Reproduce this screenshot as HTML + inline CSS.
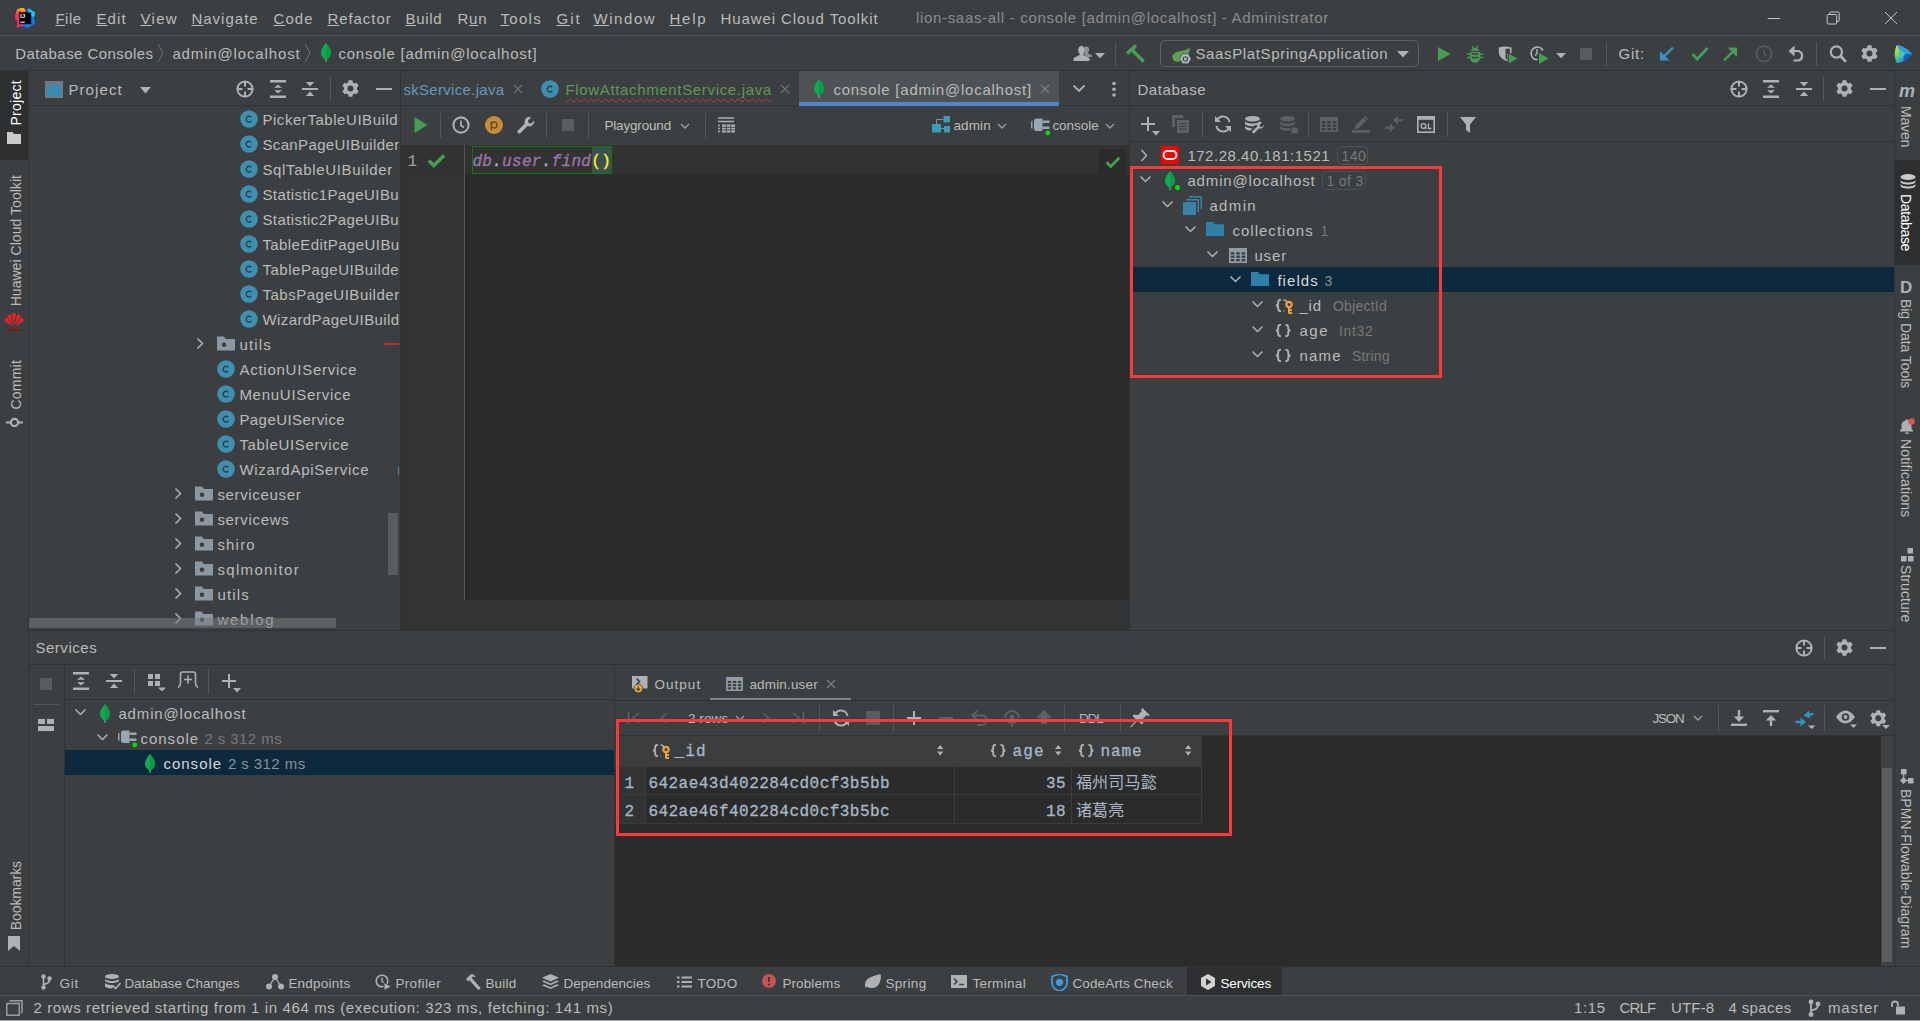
<!DOCTYPE html>
<html lang="en"><head><meta charset="utf-8"><title>console [admin@localhost]</title>
<style>
html,body{margin:0;padding:0;}
body{width:1920px;height:1021px;overflow:hidden;background:#3c3f41;position:relative;font-family:"Liberation Sans","Noto Sans CJK SC",sans-serif;font-size:15px;color:#bbbbbb;}
div,svg,span.t{position:absolute;display:block;}
.t{white-space:nowrap;}
.m{font-family:"Liberation Mono","Noto Sans CJK SC",monospace;}
u{text-decoration-thickness:1px;text-underline-offset:1px;}

</style></head>
<body>
<div style="left:0px;top:35px;width:1920px;height:1px;background:#515151;"></div>
<div style="left:0px;top:70px;width:1920px;height:1px;background:#323232;"></div>
<div style="left:28px;top:71px;width:1px;height:896px;background:#323232;"></div>
<div style="left:400px;top:71px;width:1px;height:560px;background:#323232;"></div>
<div style="left:1129px;top:71px;width:1px;height:560px;background:#323232;"></div>
<div style="left:1894px;top:71px;width:1px;height:896px;background:#323232;"></div>
<div style="left:29px;top:105px;width:371px;height:1px;background:#323232;"></div>
<div style="left:401px;top:105px;width:728px;height:1px;background:#323232;"></div>
<div style="left:1130px;top:105px;width:764px;height:1px;background:#323232;"></div>
<div style="left:1130px;top:141px;width:764px;height:1px;background:#323232;"></div>
<div style="left:401px;top:145px;width:728px;height:455px;background:#2b2b2b;"></div>
<div style="left:29px;top:630px;width:1865px;height:1px;background:#323232;"></div>
<div style="left:29px;top:664px;width:1865px;height:1px;background:#323232;"></div>
<div style="left:0px;top:966px;width:1920px;height:1px;background:#323232;"></div>
<div style="left:0px;top:995px;width:1920px;height:1px;background:#4f5254;"></div>
<svg style="left:15px;top:8px;" width="20" height="20" viewBox="0 0 20 20"><polygon points="0.500,6.500 2.500,0.800 7.500,0 10,3 5,8" fill="#fc9a1d"/><polygon points="0,7 4,2.500 10,2.500 12,10 7,17 1.500,19.800 2.500,13.500 0,11" fill="#fe2857"/><polygon points="5,0.300 9,0 11,3 6,4" fill="#fdb60d" opacity=".9"/><polygon points="12,1.500 14,0 20,4.500 19,10 20,15.500 13,20 10,19 7,16 12,8" fill="#087cfa"/><polygon points="13,0.300 20,4.500 19,9.500 14,6" fill="#21c8fd"/><polygon points="1.500,19.800 7,14 10,19 6,18" fill="#d2359f"/><rect x="4.200" y="4.400" width="12" height="11.800" fill="#000"/><rect x="5.300" y="13.600" width="4.500" height="1.100" fill="#fff"/><text x="5.100" y="10.300" font-size="6.200" font-weight="700" fill="#fff" font-family="Liberation Sans,sans-serif">IJ</text></svg>
<span class="t" style="left:55.4px;top:9px;line-height:20px;font-size:15px;color:#bbbbbb;letter-spacing:0.538px;"><u>F</u>ile</span>
<span class="t" style="left:96.4px;top:9px;line-height:20px;font-size:15px;color:#bbbbbb;letter-spacing:1.147px;"><u>E</u>dit</span>
<span class="t" style="left:140.4px;top:9px;line-height:20px;font-size:15px;color:#bbbbbb;letter-spacing:1.350px;"><u>V</u>iew</span>
<span class="t" style="left:191.4px;top:9px;line-height:20px;font-size:15px;color:#bbbbbb;letter-spacing:1.012px;"><u>N</u>avigate</span>
<span class="t" style="left:273.4px;top:9px;line-height:20px;font-size:15px;color:#bbbbbb;letter-spacing:1.142px;"><u>C</u>ode</span>
<span class="t" style="left:327.4px;top:9px;line-height:20px;font-size:15px;color:#bbbbbb;letter-spacing:0.942px;"><u>R</u>efactor</span>
<span class="t" style="left:405.4px;top:9px;line-height:20px;font-size:15px;color:#bbbbbb;letter-spacing:0.731px;"><u>B</u>uild</span>
<span class="t" style="left:457.4px;top:9px;line-height:20px;font-size:15px;color:#bbbbbb;letter-spacing:0.884px;">R<u>u</u>n</span>
<span class="t" style="left:500.4px;top:9px;line-height:20px;font-size:15px;color:#bbbbbb;letter-spacing:1.317px;"><u>T</u>ools</span>
<span class="t" style="left:556.4px;top:9px;line-height:20px;font-size:15px;color:#bbbbbb;letter-spacing:2.064px;"><u>G</u>it</span>
<span class="t" style="left:593.4px;top:9px;line-height:20px;font-size:15px;color:#bbbbbb;letter-spacing:1.585px;"><u>W</u>indow</span>
<span class="t" style="left:669.4px;top:9px;line-height:20px;font-size:15px;color:#bbbbbb;letter-spacing:1.808px;"><u>H</u>elp</span>
<span class="t" style="left:720.4px;top:9px;line-height:20px;font-size:15px;color:#bbbbbb;letter-spacing:0.920px;">Huawei Cloud Toolkit</span>
<span class="t" style="left:915.9px;top:8px;line-height:20px;font-size:15px;color:#8b8d8e;letter-spacing:0.689px;">lion-saas-all - console [admin@localhost] - Administrator</span>
<svg style="left:1767px;top:11px;" width="14" height="14" viewBox="0 0 14 14"><path d="M.7 7.500h12.500" stroke="#c4c4c4" stroke-width="1"/></svg>
<svg style="left:1826px;top:11px;" width="14" height="14" viewBox="0 0 14 14"><rect x="1.200" y="3.500" width="9.500" height="9.500" rx="1" fill="none" stroke="#c4c4c4" stroke-width="1"/><path d="M3.700 3.500v-1.500q0-1 1-1h7.500q1 0 1 1v7.500q0 1-1 1h-1.500" fill="none" stroke="#c4c4c4" stroke-width="1"/></svg>
<svg style="left:1884px;top:11px;" width="14" height="14" viewBox="0 0 14 14"><path d="M1 1l12 12M13 1l-12 12" stroke="#c4c4c4" stroke-width="1"/></svg>
<span class="t" style="left:15.2px;top:44px;line-height:20px;font-size:15px;color:#bbbbbb;letter-spacing:0.430px;">Database Consoles</span>
<svg style="left:156px;top:43px;" width="10" height="20" viewBox="0 0 10 20"><path d="M2 1l5 9-5 9" stroke="#6d6f70" stroke-width="1" fill="none"/></svg>
<span class="t" style="left:172.4px;top:44px;line-height:20px;font-size:15px;color:#bbbbbb;letter-spacing:0.857px;">admin@localhost</span>
<svg style="left:303px;top:43px;" width="10" height="20" viewBox="0 0 10 20"><path d="M2 1l5 9-5 9" stroke="#6d6f70" stroke-width="1" fill="none"/></svg>
<svg style="left:321px;top:43px;" width="10" height="19" viewBox="0 0 10 19"><path d="M5 0C2 3.5 0 6.5 0 9.5C0 13 2.5 15.5 4.6 16.5L4.7 19h.8L5.6 16.5C7.5 15.5 10 13 10 9.5C10 6.5 8 3.5 5 0z" fill="#10aa50"/><path d="M5 0C8 3.5 10 6.5 10 9.5C10 13 7.5 15.5 5.4 16.5L5 16.5z" fill="#0e9a48"/><path d="M4.7 16.3h.7l-.1 2.7h-.5z" fill="#b8c4c2"/></svg>
<span class="t" style="left:338.4px;top:44px;line-height:20px;font-size:15px;color:#bbbbbb;letter-spacing:0.783px;">console [admin@localhost]</span>
<svg style="left:1073px;top:45px;" width="20" height="17" viewBox="0 0 20 17"><path d="M13.500 1.500c1.700 0 2.700 1.300 2.700 3 0 1.200-.5 2.300-1.200 3v.8l4 1.900v1.800h-4.500l-3.500-2.500c.5-1 .8-2 .8-3.300 0-1.500-.3-2.700-.9-3.600.7-.7 1.600-1.100 2.600-1.100z" fill="#8d9091"/><path d="M8.300 1c2.200 0 3.500 1.700 3.500 4 0 1.700-.6 3-1.500 3.900v1.200l5.200 2.500c.6.300 1 .9 1 1.600V16H.5v-1.800c0-.7.4-1.300 1-1.600l5.200-2.500V8.900C5.800 8 5.200 6.700 5.200 5c0-2.300 1-4 3.100-4z" fill="#afb1b3"/></svg>
<svg style="left:1095px;top:53px;" width="10" height="6" viewBox="0 0 10 6"><path d="M0 0h10l-5 5.200z" fill="#afb1b3"/></svg>
<div style="left:1115px;top:42px;width:1px;height:24px;background:#555758;"></div>
<svg style="left:1125px;top:44px;" width="21" height="20" viewBox="0 0 21 20"><path d="M2 9.700L10.500 2.200" stroke="#499c54" stroke-width="3.800"/><path d="M9.500 0.800l2.800 .2-2 2.500z" fill="#499c54"/><path d="M7.300 6.300L18.700 17.500" stroke="#499c54" stroke-width="3.300"/></svg>
<div style="left:1160px;top:40px;width:258px;height:26px;border:1px solid #5e6061;border-radius:5px;box-sizing:border-box;width:259px;height:27px;"></div>
<svg style="left:1171px;top:44px;" width="22" height="20" viewBox="0 0 22 20"><path d="M18.700 2.800C17.500 5.500 14 6.300 9.500 7 4 7.800.5 11 1.500 14.500 2.300 17.300 5.500 18.200 8.500 17.500 14.500 16 19.500 10 18.700 2.800z" fill="#62a04c"/><path d="M8.600 14.800L11.500 9.800h5.800L20.200 14.800 17.300 19.800h-5.800z" fill="#adbcc8" stroke="#3c3f41" stroke-width=".7"/><circle cx="14.400" cy="15" r="2.200" fill="none" stroke="#3c3f41" stroke-width="1.100"/><rect x="13.850" y="11.600" width="1.100" height="3" fill="#3c3f41" stroke="#adbcc8" stroke-width=".5"/></svg>
<span class="t" style="left:1195.4px;top:44px;line-height:20px;font-size:15px;color:#bbbbbb;letter-spacing:0.647px;">SaasPlatSpringApplication</span>
<svg style="left:1397px;top:51px;" width="12" height="7" viewBox="0 0 12 7"><path d="M0 0h12l-6 6.500z" fill="#afb1b3"/></svg>
<svg style="left:1438px;top:47px;" width="13" height="14" viewBox="0 0 13 14"><path d="M0 0l12.500 7L0 14z" fill="#499c54"/></svg>
<svg style="left:1467px;top:45px;" width="16" height="18" viewBox="0 0 16 18"><path d="M4.300 1.200l.9-.7L7 2.800h2L10.800.5l.9.700-1.600 2.200c1.100.4 2 1.300 2.500 2.400H3.400c.5-1.100 1.400-2 2.500-2.400z" fill="#499c54"/><path d="M3 7h10v1.500h3V10h-3v1.700h3v1.500h-3c-.3 2.600-2.300 4.500-5 4.500s-4.700-1.900-5-4.500H0v-1.500h3V10H0V8.500h3z" fill="#499c54"/><path d="M4.500 9h7M4.500 12.500h7" stroke="#3c3f41" stroke-width="1.500"/></svg>
<svg style="left:1498px;top:46px;" width="20" height="19" viewBox="0 0 20 19"><path d="M.8 1.500Q7 -.5 13.500 1.500v5.500l-4 1.500v7Q2 13 .8 7z" fill="#afb1b3"/><path d="M7.500 2.800h4.500v4.200l-3 1.300v5.200l-1.500-.8z" fill="#3c3f41"/><path d="M10.500 7l9.500 5.500-9.500 5.500z" fill="#499c54" stroke="#3c3f41" stroke-width=".8"/></svg>
<svg style="left:1529px;top:45px;" width="20" height="20" viewBox="0 0 20 20"><path d="M14 5.500A6.300 6.300 0 1 0 8.500 14.700" fill="none" stroke="#afb1b3" stroke-width="1.700"/><path d="M8 4v4.200l-1.800 2.500" stroke="#afb1b3" stroke-width="1.400" fill="none"/><path d="M10 8l9.500 5.500L10 19z" fill="#499c54"/></svg>
<svg style="left:1556px;top:53px;" width="10" height="6" viewBox="0 0 10 6"><path d="M0 0h10l-5 5.200z" fill="#afb1b3"/></svg>
<div style="left:1580px;top:48px;width:12px;height:12px;background:#5a5c5d;"></div>
<div style="left:1606px;top:42px;width:1px;height:24px;background:#555758;"></div>
<span class="t" style="left:1618.4px;top:44px;line-height:20px;font-size:15px;color:#bbbbbb;letter-spacing:0.819px;">Git:</span>
<svg style="left:1659px;top:46px;" width="15" height="15" viewBox="0 0 15 15"><path d="M14 1.500L5 10.500" stroke="#3592c4" stroke-width="2.400" fill="none"/><path d="M1 5v9.500h9.500z" fill="#3592c4"/></svg>
<svg style="left:1691px;top:46px;" width="18" height="15" viewBox="0 0 18 15"><path d="M1.500 8.200l4.800 4.800L16.500 2" stroke="#499c54" stroke-width="2.700" fill="none"/></svg>
<svg style="left:1723px;top:47px;" width="15" height="15" viewBox="0 0 15 15"><path d="M1 13.500l9-9" stroke="#499c54" stroke-width="2.400" fill="none"/><path d="M4.500 .5H14V10z" fill="#499c54"/></svg>
<svg style="left:1755px;top:45px;" width="18" height="18" viewBox="0 0 18 18"><circle cx="9" cy="8.800" r="7.700" fill="none" stroke="#595b5c" stroke-width="1.700"/><path d="M9 4.800v4.200l2.800 1.800" stroke="#595b5c" stroke-width="1.500" fill="none"/></svg>
<svg style="left:1788px;top:45px;" width="18" height="17" viewBox="0 0 18 17"><path d="M4.500 6h6.200a5 5 0 0 1 0 9.500H5.500" stroke="#afb1b3" stroke-width="2.200" fill="none"/><path d="M6.500 .5v11L.5 6z" fill="#afb1b3"/></svg>
<div style="left:1816px;top:42px;width:1px;height:24px;background:#555758;"></div>
<svg style="left:1828px;top:44px;" width="20" height="20" viewBox="0 0 20 20"><circle cx="8.400" cy="8" r="5.600" fill="none" stroke="#afb1b3" stroke-width="2.200"/><path d="M12.500 12l5.500 5.800" stroke="#afb1b3" stroke-width="2.600"/></svg>
<svg style="left:1861px;top:45px;" width="17" height="17" viewBox="0 0 16 16"><path d="M5.81 2.31L6.20 0.21L9.80 0.21L10.19 2.31L11.84 3.26L13.85 2.54L15.65 5.66L14.02 7.05L14.02 8.95L15.65 10.34L13.85 13.46L11.84 12.74L10.19 13.69L9.80 15.79L6.20 15.79L5.81 13.69L4.16 12.74L2.15 13.46L0.35 10.34L1.98 8.95L1.98 7.05L0.35 5.66L2.15 2.54L4.16 3.26z" fill="#afb1b3"/><circle cx="8" cy="8" r="2.800" fill="#3c3f41"/></svg>
<svg style="left:1894px;top:44px;" width="19" height="20" viewBox="0 0 19 20"><defs><linearGradient id="cg" x1="0" y1="0" x2="0" y2="1"><stop offset="0" stop-color="#f2e23c"/><stop offset=".5" stop-color="#8fd455"/><stop offset="1" stop-color="#22b4a0"/></linearGradient></defs><path d="M3 1C9 1.500 15 6 18 10 15 14 9 18.500 3 19 0 13 0 7 3 1z" fill="#2a9fe0"/><path d="M3 1C6 6 6 14 3 19 0 13 0 7 3 1z" fill="url(#cg)"/><path d="M3 1C5 4 9 8.500 11 10 9 11.500 5 16 3 19 6.500 14 6.500 6 3 1z" fill="#3fc79a"/><path d="M11 10L18 10 14 14.500 9 17z" fill="#1559c8"/><path d="M6 5.500L11 10 6 14.500Q7.500 10 6 5.500z" fill="#46d0b0" opacity=".8"/></svg>
<svg style="left:45px;top:81px;" width="18" height="17" viewBox="0 0 18 17"><rect x="0" y="0" width="18" height="17" fill="#6e7b85"/><rect x="2" y="4" width="14" height="11" fill="#3a8bb0"/></svg>
<span class="t" style="left:68.4px;top:80px;line-height:20px;font-size:15px;color:#bbbbbb;letter-spacing:1.102px;">Project</span>
<svg style="left:140px;top:87px;" width="11" height="7" viewBox="0 0 11 7"><path d="M0 0h11l-5.500 6.500z" fill="#afb1b3"/></svg>
<svg style="left:236px;top:80px;" width="18" height="18" viewBox="0 0 18 18"><circle cx="9" cy="9" r="7.600" fill="none" stroke="#afb1b3" stroke-width="2"/><path d="M9 1.500v5M9 11.500v5M1.500 9h5M11.500 9h5" stroke="#afb1b3" stroke-width="2"/></svg>
<svg style="left:270px;top:80px;" width="16" height="18" viewBox="0 0 16 18"><path d="M0 1.300h16M0 16.700h16" stroke="#afb1b3" stroke-width="2.500"/><path d="M8 4.400l4 3.300H4zM8 13.600l4-3.300H4z" fill="#afb1b3"/></svg>
<svg style="left:302px;top:80px;" width="16" height="18" viewBox="0 0 16 18"><path d="M0 9h16" stroke="#afb1b3" stroke-width="2"/><path d="M8 6.500l4.200-4.500H3.800zM8 11.500l4.200 4.500H3.800z" fill="#afb1b3"/></svg>
<div style="left:330px;top:77px;width:1px;height:24px;background:#555758;"></div>
<svg style="left:342px;top:80px;" width="17" height="17" viewBox="0 0 16 16"><path d="M5.81 2.31L6.20 0.21L9.80 0.21L10.19 2.31L11.84 3.26L13.85 2.54L15.65 5.66L14.02 7.05L14.02 8.95L15.65 10.34L13.85 13.46L11.84 12.74L10.19 13.69L9.80 15.79L6.20 15.79L5.81 13.69L4.16 12.74L2.15 13.46L0.35 10.34L1.98 8.95L1.98 7.05L0.35 5.66L2.15 2.54L4.16 3.26z" fill="#afb1b3"/><circle cx="8" cy="8" r="2.800" fill="#3c3f41"/></svg>
<div style="left:376px;top:88px;width:16px;height:2px;background:#afb1b3;"></div>
<div style="left:0;top:106px;width:399px;height:524px;overflow:hidden"><div style="left:0;top:-106px;width:400px;height:630px">
<svg style="left:240px;top:110px;" width="18" height="18" viewBox="0 0 18 18"><circle cx="9" cy="9" r="8.800" fill="#3e8fb0"/><path d="M11.300 7.200a2.900 2.900 0 1 0 0 3.800" fill="none" stroke="#27434f" stroke-width="1.400"/></svg>
<span class="t" style="left:262.4px;top:110px;line-height:20px;font-size:15px;color:#bbbbbb;letter-spacing:0.553px;">PickerTableUIBuilder</span>
<svg style="left:240px;top:135px;" width="18" height="18" viewBox="0 0 18 18"><circle cx="9" cy="9" r="8.800" fill="#3e8fb0"/><path d="M11.300 7.200a2.900 2.900 0 1 0 0 3.800" fill="none" stroke="#27434f" stroke-width="1.400"/></svg>
<span class="t" style="left:262.4px;top:135px;line-height:20px;font-size:15px;color:#bbbbbb;letter-spacing:0.367px;">ScanPageUIBuilder</span>
<svg style="left:240px;top:160px;" width="18" height="18" viewBox="0 0 18 18"><circle cx="9" cy="9" r="8.800" fill="#3e8fb0"/><path d="M11.300 7.200a2.900 2.900 0 1 0 0 3.800" fill="none" stroke="#27434f" stroke-width="1.400"/></svg>
<span class="t" style="left:262.4px;top:160px;line-height:20px;font-size:15px;color:#bbbbbb;letter-spacing:0.660px;">SqlTableUIBuilder</span>
<svg style="left:240px;top:185px;" width="18" height="18" viewBox="0 0 18 18"><circle cx="9" cy="9" r="8.800" fill="#3e8fb0"/><path d="M11.300 7.200a2.900 2.900 0 1 0 0 3.800" fill="none" stroke="#27434f" stroke-width="1.400"/></svg>
<span class="t" style="left:262.4px;top:185px;line-height:20px;font-size:15px;color:#bbbbbb;letter-spacing:0.415px;">Statistic1PageUIBuilder</span>
<svg style="left:240px;top:210px;" width="18" height="18" viewBox="0 0 18 18"><circle cx="9" cy="9" r="8.800" fill="#3e8fb0"/><path d="M11.300 7.200a2.900 2.900 0 1 0 0 3.800" fill="none" stroke="#27434f" stroke-width="1.400"/></svg>
<span class="t" style="left:262.4px;top:210px;line-height:20px;font-size:15px;color:#bbbbbb;letter-spacing:0.415px;">Statistic2PageUIBuilder</span>
<svg style="left:240px;top:235px;" width="18" height="18" viewBox="0 0 18 18"><circle cx="9" cy="9" r="8.800" fill="#3e8fb0"/><path d="M11.300 7.200a2.900 2.900 0 1 0 0 3.800" fill="none" stroke="#27434f" stroke-width="1.400"/></svg>
<span class="t" style="left:262.4px;top:235px;line-height:20px;font-size:15px;color:#bbbbbb;letter-spacing:0.419px;">TableEditPageUIBuilder</span>
<svg style="left:240px;top:260px;" width="18" height="18" viewBox="0 0 18 18"><circle cx="9" cy="9" r="8.800" fill="#3e8fb0"/><path d="M11.300 7.200a2.900 2.900 0 1 0 0 3.800" fill="none" stroke="#27434f" stroke-width="1.400"/></svg>
<span class="t" style="left:262.4px;top:260px;line-height:20px;font-size:15px;color:#bbbbbb;letter-spacing:0.544px;">TablePageUIBuilder</span>
<svg style="left:240px;top:285px;" width="18" height="18" viewBox="0 0 18 18"><circle cx="9" cy="9" r="8.800" fill="#3e8fb0"/><path d="M11.300 7.200a2.900 2.900 0 1 0 0 3.800" fill="none" stroke="#27434f" stroke-width="1.400"/></svg>
<span class="t" style="left:262.4px;top:285px;line-height:20px;font-size:15px;color:#bbbbbb;letter-spacing:0.524px;">TabsPageUIBuilder</span>
<svg style="left:240px;top:310px;" width="18" height="18" viewBox="0 0 18 18"><circle cx="9" cy="9" r="8.800" fill="#3e8fb0"/><path d="M11.300 7.200a2.900 2.900 0 1 0 0 3.800" fill="none" stroke="#27434f" stroke-width="1.400"/></svg>
<span class="t" style="left:262.4px;top:310px;line-height:20px;font-size:15px;color:#bbbbbb;letter-spacing:0.421px;">WizardPageUIBuilder</span>
<svg style="left:195px;top:336px;" width="10" height="15" viewBox="0 0 10 15"><path d="M2.500 2.500l5 5-5 5" fill="none" stroke="#afb1b3" stroke-width="1.500"/></svg>
<svg style="left:217px;top:336px;" width="18" height="15" viewBox="0 0 18 15"><path d="M0 .5h6.800l2 2.500H18V14.500H0z" fill="#8b98a1"/><circle cx="7" cy="8.700" r="2.300" fill="#3c3f41"/></svg>
<span class="t" style="left:239.4px;top:335px;line-height:20px;font-size:15px;color:#bbbbbb;letter-spacing:1.153px;">utils</span>
<div style="left:384px;top:343px;width:16px;height:2px;background:#c03030;"></div>
<svg style="left:217px;top:360px;" width="18" height="18" viewBox="0 0 18 18"><circle cx="9" cy="9" r="8.800" fill="#3e8fb0"/><path d="M11.300 7.200a2.900 2.900 0 1 0 0 3.800" fill="none" stroke="#27434f" stroke-width="1.400"/></svg>
<span class="t" style="left:239.4px;top:360px;line-height:20px;font-size:15px;color:#bbbbbb;letter-spacing:0.756px;">ActionUIService</span>
<svg style="left:217px;top:385px;" width="18" height="18" viewBox="0 0 18 18"><circle cx="9" cy="9" r="8.800" fill="#3e8fb0"/><path d="M11.300 7.200a2.900 2.900 0 1 0 0 3.800" fill="none" stroke="#27434f" stroke-width="1.400"/></svg>
<span class="t" style="left:239.4px;top:385px;line-height:20px;font-size:15px;color:#bbbbbb;letter-spacing:0.729px;">MenuUIService</span>
<svg style="left:217px;top:410px;" width="18" height="18" viewBox="0 0 18 18"><circle cx="9" cy="9" r="8.800" fill="#3e8fb0"/><path d="M11.300 7.200a2.900 2.900 0 1 0 0 3.800" fill="none" stroke="#27434f" stroke-width="1.400"/></svg>
<span class="t" style="left:239.4px;top:410px;line-height:20px;font-size:15px;color:#bbbbbb;letter-spacing:0.436px;">PageUIService</span>
<svg style="left:217px;top:435px;" width="18" height="18" viewBox="0 0 18 18"><circle cx="9" cy="9" r="8.800" fill="#3e8fb0"/><path d="M11.300 7.200a2.900 2.900 0 1 0 0 3.800" fill="none" stroke="#27434f" stroke-width="1.400"/></svg>
<span class="t" style="left:239.4px;top:435px;line-height:20px;font-size:15px;color:#bbbbbb;letter-spacing:0.647px;">TableUIService</span>
<svg style="left:217px;top:460px;" width="18" height="18" viewBox="0 0 18 18"><circle cx="9" cy="9" r="8.800" fill="#3e8fb0"/><path d="M11.300 7.200a2.900 2.900 0 1 0 0 3.800" fill="none" stroke="#27434f" stroke-width="1.400"/></svg>
<span class="t" style="left:239.4px;top:460px;line-height:20px;font-size:15px;color:#bbbbbb;letter-spacing:0.728px;">WizardApiService</span>
<svg style="left:173px;top:486px;" width="10" height="15" viewBox="0 0 10 15"><path d="M2.500 2.500l5 5-5 5" fill="none" stroke="#afb1b3" stroke-width="1.500"/></svg>
<svg style="left:195px;top:486px;" width="18" height="15" viewBox="0 0 18 15"><path d="M0 .5h6.800l2 2.500H18V14.500H0z" fill="#8b98a1"/><circle cx="7" cy="8.700" r="2.300" fill="#3c3f41"/></svg>
<span class="t" style="left:217.4px;top:485px;line-height:20px;font-size:15px;color:#bbbbbb;letter-spacing:0.660px;">serviceuser</span>
<svg style="left:173px;top:511px;" width="10" height="15" viewBox="0 0 10 15"><path d="M2.500 2.500l5 5-5 5" fill="none" stroke="#afb1b3" stroke-width="1.500"/></svg>
<svg style="left:195px;top:511px;" width="18" height="15" viewBox="0 0 18 15"><path d="M0 .5h6.800l2 2.500H18V14.500H0z" fill="#8b98a1"/><circle cx="7" cy="8.700" r="2.300" fill="#3c3f41"/></svg>
<span class="t" style="left:217.4px;top:510px;line-height:20px;font-size:15px;color:#bbbbbb;letter-spacing:0.680px;">servicews</span>
<svg style="left:173px;top:536px;" width="10" height="15" viewBox="0 0 10 15"><path d="M2.500 2.500l5 5-5 5" fill="none" stroke="#afb1b3" stroke-width="1.500"/></svg>
<svg style="left:195px;top:536px;" width="18" height="15" viewBox="0 0 18 15"><path d="M0 .5h6.800l2 2.500H18V14.500H0z" fill="#8b98a1"/><circle cx="7" cy="8.700" r="2.300" fill="#3c3f41"/></svg>
<span class="t" style="left:217.4px;top:535px;line-height:20px;font-size:15px;color:#bbbbbb;letter-spacing:1.196px;">shiro</span>
<svg style="left:173px;top:561px;" width="10" height="15" viewBox="0 0 10 15"><path d="M2.500 2.500l5 5-5 5" fill="none" stroke="#afb1b3" stroke-width="1.500"/></svg>
<svg style="left:195px;top:561px;" width="18" height="15" viewBox="0 0 18 15"><path d="M0 .5h6.800l2 2.500H18V14.500H0z" fill="#8b98a1"/><circle cx="7" cy="8.700" r="2.300" fill="#3c3f41"/></svg>
<span class="t" style="left:217.4px;top:560px;line-height:20px;font-size:15px;color:#bbbbbb;letter-spacing:1.344px;">sqlmonitor</span>
<svg style="left:173px;top:586px;" width="10" height="15" viewBox="0 0 10 15"><path d="M2.500 2.500l5 5-5 5" fill="none" stroke="#afb1b3" stroke-width="1.500"/></svg>
<svg style="left:195px;top:586px;" width="18" height="15" viewBox="0 0 18 15"><path d="M0 .5h6.800l2 2.500H18V14.500H0z" fill="#8b98a1"/><circle cx="7" cy="8.700" r="2.300" fill="#3c3f41"/></svg>
<span class="t" style="left:217.4px;top:585px;line-height:20px;font-size:15px;color:#bbbbbb;letter-spacing:1.153px;">utils</span>
<svg style="left:173px;top:611px;" width="10" height="15" viewBox="0 0 10 15"><path d="M2.500 2.500l5 5-5 5" fill="none" stroke="#afb1b3" stroke-width="1.500"/></svg>
<svg style="left:195px;top:611px;" width="18" height="15" viewBox="0 0 18 15"><path d="M0 .5h6.800l2 2.500H18V14.500H0z" fill="#8b98a1"/><circle cx="7" cy="8.700" r="2.300" fill="#3c3f41"/></svg>
<span class="t" style="left:217.4px;top:610px;line-height:20px;font-size:15px;color:#bbbbbb;letter-spacing:1.751px;">weblog</span>
<div style="left:388px;top:513px;width:10px;height:62px;background:#5a5d5f;"></div>
<div style="left:29px;top:618px;width:307px;height:10px;background:rgba(120,123,125,.55);"></div>
</div></div>
<div style="left:398px;top:467px;width:1px;height:8px;background:#4a7fb5;"></div>
<div style="left:401px;top:71px;width:728px;height:35px;overflow:hidden"><div style="left:-401px;top:-71px;width:1130px;height:110px">
<span class="t" style="left:403.4px;top:80px;line-height:20px;font-size:15px;color:#6897bb;letter-spacing:0.315px;">skService.java</span>
<svg style="left:513px;top:84px;" width="10" height="10" viewBox="0 0 10 10"><path d="M1 1l8 8M9 1l-8 8" stroke="#6e7173" stroke-width="1.200"/></svg>
<svg style="left:541px;top:80px;" width="18" height="18" viewBox="0 0 18 18"><circle cx="9" cy="9" r="8.800" fill="#3e8fb0"/><path d="M11.300 7.200a2.900 2.900 0 1 0 0 3.800" fill="none" stroke="#27434f" stroke-width="1.400"/></svg>
<span class="t" style="left:565.4px;top:80px;line-height:20px;font-size:15px;color:#629755;letter-spacing:0.662px;text-decoration:underline wavy #bc3f3c 1px;text-underline-offset:3px;">FlowAttachmentService.java</span>
<svg style="left:780px;top:84px;" width="10" height="10" viewBox="0 0 10 10"><path d="M1 1l8 8M9 1l-8 8" stroke="#6e7173" stroke-width="1.200"/></svg>
<div style="left:799px;top:71px;width:260px;height:34px;background:#4e5254;"></div>
<div style="left:799px;top:102px;width:260px;height:4px;background:#4a88c7;"></div>
<svg style="left:814px;top:79px;" width="10" height="19" viewBox="0 0 10 19"><path d="M5 0C2 3.5 0 6.5 0 9.5C0 13 2.5 15.5 4.6 16.5L4.7 19h.8L5.6 16.5C7.5 15.5 10 13 10 9.5C10 6.5 8 3.5 5 0z" fill="#10aa50"/><path d="M5 0C8 3.5 10 6.5 10 9.5C10 13 7.5 15.5 5.4 16.5L5 16.5z" fill="#0e9a48"/><path d="M4.7 16.3h.7l-.1 2.7h-.5z" fill="#b8c4c2"/></svg>
<span class="t" style="left:833.4px;top:80px;line-height:20px;font-size:15px;color:#bbbbbb;letter-spacing:0.763px;">console [admin@localhost]</span>
<svg style="left:1040px;top:84px;" width="10" height="10" viewBox="0 0 10 10"><path d="M1 1l8 8M9 1l-8 8" stroke="#7f8283" stroke-width="1.200"/></svg>
</div></div>
<svg style="left:1072px;top:84px;" width="14" height="9" viewBox="0 0 14 9"><path d="M1.500 1.500l5.500 5.500 5.500-5.500" fill="none" stroke="#afb1b3" stroke-width="1.800"/></svg>
<svg style="left:1111px;top:81px;" width="6" height="17" viewBox="0 0 6 17"><circle cx="3" cy="2.500" r="1.800" fill="#afb1b3"/><circle cx="3" cy="8.200" r="1.800" fill="#afb1b3"/><circle cx="3" cy="14" r="1.800" fill="#afb1b3"/></svg>
<svg style="left:414px;top:117px;" width="14" height="16" viewBox="0 0 14 16"><path d="M.5 0l13 8-13 8z" fill="#499c54"/></svg>
<div style="left:440px;top:113px;width:1px;height:25px;background:#555758;"></div>
<svg style="left:452px;top:116px;" width="18" height="18" viewBox="0 0 18 18"><circle cx="9" cy="9" r="7.600" fill="none" stroke="#afb1b3" stroke-width="2.100"/><path d="M9 4.500v5l3 2" stroke="#afb1b3" stroke-width="1.700" fill="none"/></svg>
<svg style="left:485px;top:116px;" width="18" height="18" viewBox="0 0 18 18"><circle cx="9" cy="9" r="9" fill="#c38d3c"/><path d="M6.300 5.500v9M6.300 8.300q1.200-2.300 3.200-2.300 2.500 0 2.500 3 0 3-2.500 3-2 0-3.200-2" fill="none" stroke="#6a4a1a" stroke-width="1.400"/></svg>
<svg style="left:517px;top:116px;" width="18" height="18" viewBox="0 0 18 18"><path d="M12.500.800a5 5 0 0 0-4.600 6.700L.9 14.500a1.600 1.600 0 0 0 0 2.300l.3.300a1.600 1.600 0 0 0 2.300 0l7-7a5 5 0 0 0 6.700-4.600l-.1-.9-3 3-2.500-.6-.6-2.500 3-3z" fill="#afb1b3"/></svg>
<div style="left:546px;top:113px;width:1px;height:25px;background:#555758;"></div>
<div style="left:562px;top:119px;width:12px;height:12px;background:#5a5c5d;"></div>
<div style="left:588px;top:113px;width:1px;height:25px;background:#555758;"></div>
<span class="t" style="left:604.4px;top:116px;line-height:20px;font-size:13.5px;color:#bbbbbb;letter-spacing:-0.168px;">Playground</span>
<svg style="left:680px;top:123px;" width="10" height="7" viewBox="0 0 10 7"><path d="M1 1l4 4 4-4" fill="none" stroke="#9a9da0" stroke-width="1.400"/></svg>
<div style="left:705px;top:113px;width:1px;height:25px;background:#555758;"></div>
<svg style="left:718px;top:117px;" width="18" height="16" viewBox="0 0 18 16"><path d="M0 1h16M0 4.500h16" stroke="#afb1b3" stroke-width="1.600"/><path d="M0 8.500h2M0 11.500h2M0 14.500h2" stroke="#afb1b3" stroke-width="1.600"/><rect x="4" y="7.500" width="13" height="8" fill="#afb1b3"/><path d="M8.300 7.500v8M12.700 7.500v8M4 10.300h13M4 12.900h13" stroke="#3c3f41" stroke-width=".9"/></svg>
<svg style="left:932px;top:116px;" width="18" height="17" viewBox="0 0 18 17"><path d="M4.500 8V3.500h7M9 12.500h3" stroke="#8a8d8f" stroke-width="1" fill="none"/><rect x="11.500" y="0" width="6.500" height="6.500" fill="#3b9cb8"/><rect x="0" y="8" width="9" height="8.500" fill="#3b9cb8"/><rect x="12" y="10" width="6" height="6.500" fill="#3b9cb8"/></svg>
<span class="t" style="left:953.4px;top:116px;line-height:20px;font-size:13.5px;color:#bbbbbb;letter-spacing:0.130px;">admin</span>
<svg style="left:997px;top:123px;" width="10" height="7" viewBox="0 0 10 7"><path d="M1 1l4 4 4-4" fill="none" stroke="#9a9da0" stroke-width="1.400"/></svg>
<svg style="left:1030.5px;top:116px;" width="20" height="20" viewBox="0 0 20 20"><path d="M0 6.500q0-2 1.500-2v8.500Q0 13 0 11z" fill="#9aa7b0"/><path d="M3 4.500Q3 2.500 5.500 2.500h6v12.500h-6Q3 15 3 13z" fill="#9aa7b0"/><path d="M11.500 4.500h7v2.500h-7zM11.500 10.500h7v2.500h-7z" fill="#9aa7b0"/><circle cx="16.800" cy="17" r="2.400" fill="#00e000"/></svg>
<span class="t" style="left:1052.4px;top:116px;line-height:20px;font-size:13.5px;color:#bbbbbb;letter-spacing:-0.041px;">console</span>
<svg style="left:1105px;top:123px;" width="10" height="7" viewBox="0 0 10 7"><path d="M1 1l4 4 4-4" fill="none" stroke="#9a9da0" stroke-width="1.400"/></svg>
<div style="left:401px;top:145px;width:63px;height:455px;background:#313335;"></div>
<div style="left:464px;top:145px;width:1px;height:455px;background:#555555;"></div>
<div style="left:401px;top:145px;width:728px;height:29px;background:#323232;"></div>
<div style="left:464px;top:145px;width:1px;height:29px;background:#555555;"></div>
<span class="t m" style="left:407.4px;top:152px;line-height:20px;font-size:16px;color:#a4a3a3;">1</span>
<svg style="left:427px;top:153px;" width="19" height="15" viewBox="0 0 19 15"><path d="M1.800 7.500l5 5L17 2.500" stroke="#499c54" stroke-width="3.600" fill="none"/></svg>
<div style="left:472px;top:146px;width:140px;height:28px;border:1px solid #0a7a0a;box-sizing:border-box;"></div>
<div style="left:592px;top:147px;width:19px;height:26px;background:#3b514d;"></div>
<span class="t m" style="left:472.4px;top:152px;line-height:20px;font-size:16px;color:#9876aa;letter-spacing:0.297px;font-style:italic;-webkit-text-stroke:0.35px;">db<span style="color:#a9b7c6">.</span>user<span style="color:#a9b7c6">.</span>find<span style="color:#ffef28;font-style:normal">()</span></span>
<div style="left:1099px;top:149px;width:27px;height:25px;background:#2b2b2b;border-radius:5px 5px 0 0;"></div>
<svg style="left:1105px;top:156px;" width="16" height="13" viewBox="0 0 16 13"><path d="M1.500 6.200l4.200 4.300L14.300 1.800" stroke="#499c54" stroke-width="2.800" fill="none"/></svg>
<div style="left:401px;top:600px;width:728px;height:30px;background:#313335;"></div>
<span class="t" style="left:1137.4px;top:80px;line-height:20px;font-size:15px;color:#bbbbbb;letter-spacing:0.583px;">Database</span>
<svg style="left:1730px;top:80px;" width="18" height="18" viewBox="0 0 18 18"><circle cx="9" cy="9" r="7.600" fill="none" stroke="#afb1b3" stroke-width="2"/><path d="M9 1.500v5M9 11.500v5M1.500 9h5M11.500 9h5" stroke="#afb1b3" stroke-width="2"/></svg>
<svg style="left:1763px;top:80px;" width="16" height="18" viewBox="0 0 16 18"><path d="M0 1.300h16M0 16.700h16" stroke="#afb1b3" stroke-width="2.500"/><path d="M8 4.400l4 3.300H4zM8 13.600l4-3.300H4z" fill="#afb1b3"/></svg>
<svg style="left:1796px;top:80px;" width="16" height="18" viewBox="0 0 16 18"><path d="M0 9h16" stroke="#afb1b3" stroke-width="2"/><path d="M8 6.500l4.200-4.500H3.800zM8 11.500l4.200 4.500H3.800z" fill="#afb1b3"/></svg>
<div style="left:1823px;top:77px;width:1px;height:24px;background:#555758;"></div>
<svg style="left:1836px;top:80px;" width="17" height="17" viewBox="0 0 16 16"><path d="M5.81 2.31L6.20 0.21L9.80 0.21L10.19 2.31L11.84 3.26L13.85 2.54L15.65 5.66L14.02 7.05L14.02 8.95L15.65 10.34L13.85 13.46L11.84 12.74L10.19 13.69L9.80 15.79L6.20 15.79L5.81 13.69L4.16 12.74L2.15 13.46L0.35 10.34L1.98 8.95L1.98 7.05L0.35 5.66L2.15 2.54L4.16 3.26z" fill="#afb1b3"/><circle cx="8" cy="8" r="2.800" fill="#3c3f41"/></svg>
<div style="left:1870px;top:88px;width:16px;height:2px;background:#afb1b3;"></div>
<svg style="left:1141px;top:116px;" width="20" height="20" viewBox="0 0 20 20"><path d="M7 1v14M0 8h14" stroke="#afb1b3" stroke-width="2"/><path d="M11 15h8l-4 4.500z" fill="#afb1b3"/></svg>
<svg style="left:1172px;top:115px;" width="18" height="18" viewBox="0 0 18 18"><path d="M0 0h11v3H3v9H0z" fill="#5e6061"/><rect x="5" y="5" width="12" height="13" fill="#5e6061"/><path d="M7.500 9h7M7.500 11.500h7M7.500 14h7" stroke="#3c3f41" stroke-width="1"/></svg>
<div style="left:1202px;top:112px;width:1px;height:25px;background:#555758;"></div>
<svg style="left:1214px;top:115px;" width="18" height="18" viewBox="0 0 18 18"><path d="M15.500 7A6.700 6.700 0 0 0 3.300 4.500M2.500 11a6.700 6.700 0 0 0 12.200 2.500" fill="none" stroke="#afb1b3" stroke-width="2"/><path d="M1 1v6h6zM17 17v-6h-6z" fill="#afb1b3"/></svg>
<svg style="left:1245px;top:116px;" width="20" height="18" viewBox="0 0 20 18"><ellipse cx="7.500" cy="2.800" rx="7.500" ry="2.800" fill="#afb1b3"/><path d="M0 4.800c0 1.500 3.400 2.800 7.500 2.800s7.500-1.300 7.500-2.800v2.600c0 1.500-3.400 2.800-7.500 2.800s-7.500-1.300-7.500-2.800zM0 9.400c0 1.500 3.400 2.800 7.500 2.800s7.500-1.300 7.500-2.800v2.600c0 1.500-3.400 2.800-7.500 2.800s-7.500-1.300-7.500-2.800z" fill="#afb1b3"/><path d="M6 18l7-7.500" stroke="#3c3f41" stroke-width="5.500"/><path d="M15.500 5.500a3.600 3.600 0 0 0-3.300 4.900l-5.400 5.400 1.900 1.900 5.400-5.400a3.600 3.600 0 0 0 4.900-3.300l-2.200 2.200-1.700-.5-.5-1.700 2.200-2.200z" fill="#afb1b3"/></svg>
<svg style="left:1280px;top:116px;" width="19" height="18" viewBox="0 0 19 18"><ellipse cx="7.500" cy="2.800" rx="7.500" ry="2.800" fill="#5e6061"/><path d="M0 4.800c0 1.500 3.400 2.800 7.500 2.800s7.500-1.300 7.500-2.800v2.600c0 1.500-3.400 2.800-7.500 2.800s-7.500-1.300-7.500-2.800zM0 9.400c0 1.500 3.400 2.800 7.500 2.800s7.500-1.300 7.500-2.800v2.600c0 1.500-3.400 2.800-7.500 2.800s-7.500-1.300-7.500-2.800z" fill="#5e6061"/><rect x="11" y="11" width="7.500" height="7" fill="#5e6061" stroke="#3c3f41" stroke-width="1.200"/></svg>
<div style="left:1308px;top:112px;width:1px;height:25px;background:#555758;"></div>
<svg style="left:1320px;top:117px;" width="18" height="15" viewBox="0 0 18 15"><rect x="0" y="0" width="18" height="15" fill="#5e6061"/><rect x="1.8" y="4.2" width="3.600" height="2.300" fill="#3c3f41"/><rect x="7.2" y="4.2" width="3.600" height="2.300" fill="#3c3f41"/><rect x="12.6" y="4.2" width="3.600" height="2.300" fill="#3c3f41"/><rect x="1.8" y="7.6" width="3.600" height="2.300" fill="#3c3f41"/><rect x="7.2" y="7.6" width="3.600" height="2.300" fill="#3c3f41"/><rect x="12.6" y="7.6" width="3.600" height="2.300" fill="#3c3f41"/><rect x="1.8" y="11" width="3.600" height="2.300" fill="#3c3f41"/><rect x="7.2" y="11" width="3.600" height="2.300" fill="#3c3f41"/><rect x="12.6" y="11" width="3.600" height="2.300" fill="#3c3f41"/></svg>
<svg style="left:1352px;top:115px;" width="18" height="19" viewBox="0 0 18 19"><path d="M13 1l3 3-9.500 9.500-3.800.8.800-3.800z" fill="#5e6061"/><path d="M11.300 2.700l3 3" stroke="#3c3f41" stroke-width="1"/><path d="M0 16.400h18" stroke="#5e6061" stroke-width="2.800"/></svg>
<svg style="left:1385px;top:114px;" width="18" height="20" viewBox="0 0 18 20"><path d="M17.800 6.200h-6" stroke="#5e6061" stroke-width="2.200"/><path d="M8 6.200l5-4.500v9z" fill="#5e6061"/><path d="M0 13.700h6" stroke="#5e6061" stroke-width="2.200"/><path d="M9.800 13.700l-5-4.500v9z" fill="#5e6061"/></svg>
<svg style="left:1417px;top:116px;" width="18" height="17" viewBox="0 0 18 17"><rect x=".8" y=".8" width="16.400" height="15.400" fill="none" stroke="#afb1b3" stroke-width="1.600"/><rect x=".8" y=".8" width="16.400" height="3" fill="#afb1b3"/><circle cx="6.500" cy="10" r="2.400" fill="none" stroke="#afb1b3" stroke-width="1.300"/><path d="M7.500 11l1.800 1.800M11.500 7.300v5.200h3" stroke="#afb1b3" stroke-width="1.300" fill="none"/></svg>
<div style="left:1447px;top:112px;width:1px;height:25px;background:#555758;"></div>
<svg style="left:1460px;top:117px;" width="16" height="16" viewBox="0 0 16 16"><path d="M0 0h16l-6 7.500V16l-4-3V7.500z" fill="#afb1b3"/></svg>
<div style="left:1130px;top:267px;width:764px;height:25px;background:#0d293e;"></div>
<svg style="left:1139px;top:148px;" width="10" height="15" viewBox="0 0 10 15"><path d="M2.500 2l5 5.500-5 5.500" fill="none" stroke="#afb1b3" stroke-width="1.500"/></svg>
<svg style="left:1161px;top:146px;" width="18" height="18" viewBox="0 0 18 18"><rect width="18" height="18" fill="#f80000"/><rect x="2.500" y="5" width="13" height="8" rx="4" fill="none" stroke="#fff" stroke-width="1.800"/></svg>
<span class="t" style="left:1187.4px;top:146px;line-height:20px;font-size:15px;color:#bbbbbb;letter-spacing:0.519px;">172.28.40.181:1521</span>
<div style="left:1337px;top:146px;width:31px;height:19px;border:1px solid #4e5254;border-radius:4px;box-sizing:border-box;"></div>
<span class="t" style="left:1341.4px;top:146px;line-height:20px;font-size:14px;color:#787878;letter-spacing:0.470px;">140</span>
<svg style="left:1139px;top:174px;" width="15" height="10" viewBox="0 0 15 10"><path d="M1.500 2.500l5 5 5-5" fill="none" stroke="#afb1b3" stroke-width="1.500"/></svg>
<svg style="left:1165px;top:171px;" width="10" height="19" viewBox="0 0 10 19"><path d="M5 0C2 3.5 0 6.5 0 9.5C0 13 2.5 15.5 4.6 16.5L4.7 19h.8L5.6 16.5C7.5 15.5 10 13 10 9.5C10 6.5 8 3.5 5 0z" fill="#10aa50"/><path d="M5 0C8 3.5 10 6.5 10 9.5C10 13 7.5 15.5 5.4 16.5L5 16.5z" fill="#0e9a48"/><path d="M4.7 16.3h.7l-.1 2.7h-.5z" fill="#b8c4c2"/></svg>
<svg style="left:1174px;top:184px;" width="7" height="7" viewBox="0 0 7 7"><circle cx="3.500" cy="3.500" r="2.500" fill="#00e000"/></svg>
<span class="t" style="left:1187.4px;top:171px;line-height:20px;font-size:15px;color:#bbbbbb;letter-spacing:0.857px;">admin@localhost</span>
<div style="left:1322px;top:171px;width:44px;height:19px;border:1px solid #4e5254;border-radius:4px;box-sizing:border-box;"></div>
<span class="t" style="left:1326.4px;top:171px;line-height:20px;font-size:14px;color:#787878;letter-spacing:0.354px;">1 of 3</span>
<svg style="left:1161px;top:199px;" width="15" height="10" viewBox="0 0 15 10"><path d="M1.500 2.500l5 5 5-5" fill="none" stroke="#afb1b3" stroke-width="1.500"/></svg>
<svg style="left:1183px;top:196px;" width="19" height="19" viewBox="0 0 19 19"><path d="M6 0h13v13h-1.500V1.500H6z" fill="#3a83a6"/><path d="M3 3h13v13h-1.500V4.500H3z" fill="#3a83a6"/><rect x="0" y="6" width="13" height="13" fill="#3a83a6"/></svg>
<span class="t" style="left:1209.4px;top:196px;line-height:20px;font-size:15px;color:#bbbbbb;letter-spacing:1.360px;">admin</span>
<svg style="left:1184px;top:224px;" width="15" height="10" viewBox="0 0 15 10"><path d="M1.500 2.500l5 5 5-5" fill="none" stroke="#afb1b3" stroke-width="1.500"/></svg>
<svg style="left:1206px;top:222px;" width="19" height="15" viewBox="0 0 19 15"><path d="M0 0h7l2 2.300h9V14H0z" fill="#2f80a8"/></svg>
<span class="t" style="left:1232.4px;top:221px;line-height:20px;font-size:15px;color:#bbbbbb;letter-spacing:1.025px;">collections</span>
<span class="t" style="left:1320.4px;top:221px;line-height:20px;font-size:14px;color:#787878;">1</span>
<svg style="left:1206px;top:249px;" width="15" height="10" viewBox="0 0 15 10"><path d="M1.500 2.500l5 5 5-5" fill="none" stroke="#afb1b3" stroke-width="1.500"/></svg>
<svg style="left:1229px;top:248px;" width="18" height="15" viewBox="0 0 18 15"><rect x="0" y="0" width="18" height="15" fill="#909ca5"/><rect x="1.8" y="4.2" width="3.600" height="2.300" fill="#3c3f41"/><rect x="7.2" y="4.2" width="3.600" height="2.300" fill="#3c3f41"/><rect x="12.6" y="4.2" width="3.600" height="2.300" fill="#3c3f41"/><rect x="1.8" y="7.6" width="3.600" height="2.300" fill="#3c3f41"/><rect x="7.2" y="7.6" width="3.600" height="2.300" fill="#3c3f41"/><rect x="12.6" y="7.6" width="3.600" height="2.300" fill="#3c3f41"/><rect x="1.8" y="11" width="3.600" height="2.300" fill="#3c3f41"/><rect x="7.2" y="11" width="3.600" height="2.300" fill="#3c3f41"/><rect x="12.6" y="11" width="3.600" height="2.300" fill="#3c3f41"/></svg>
<span class="t" style="left:1254.4px;top:246px;line-height:20px;font-size:15px;color:#bbbbbb;letter-spacing:0.871px;">user</span>
<svg style="left:1229px;top:274px;" width="15" height="10" viewBox="0 0 15 10"><path d="M1.500 2.500l5 5 5-5" fill="none" stroke="#afb1b3" stroke-width="1.500"/></svg>
<svg style="left:1251px;top:272px;" width="19" height="15" viewBox="0 0 19 15"><path d="M0 0h7l2 2.300h9V14H0z" fill="#2f80a8"/></svg>
<span class="t" style="left:1277.4px;top:271px;line-height:20px;font-size:15px;color:#d8d8d8;letter-spacing:1.054px;">fields</span>
<span class="t" style="left:1324.4px;top:271px;line-height:20px;font-size:14px;color:#8a9199;">3</span>
<svg style="left:1251px;top:299px;" width="15" height="10" viewBox="0 0 15 10"><path d="M1.500 2.500l5 5 5-5" fill="none" stroke="#afb1b3" stroke-width="1.500"/></svg>
<svg style="left:1275px;top:298.5px;" width="20" height="17" viewBox="0 0 20 17"><path d="M6 .8Q3.200 .8 3.200 3V4.600Q3.200 6.300 1 6.500 3.200 6.700 3.200 8.400V10Q3.200 12.200 6 12.200" fill="none" stroke="#afb1b3" stroke-width="1.900"/><path d="M8.500 1h.8q2 .3 2.300 2M8.500 12h.8" fill="none" stroke="#afb1b3" stroke-width="1.500"/><circle cx="14" cy="5.500" r="2.600" fill="none" stroke="#e8a33e" stroke-width="2.200"/><path d="M14 8v6.500M14 11h3M14 14h3" stroke="#e8a33e" stroke-width="2" fill="none"/></svg>
<span class="t" style="left:1299.4px;top:296px;line-height:20px;font-size:15px;color:#bbbbbb;letter-spacing:0.884px;">_id</span>
<span class="t" style="left:1332.9px;top:296px;line-height:20px;font-size:14px;color:#787878;letter-spacing:0.237px;">ObjectId</span>
<svg style="left:1251px;top:324px;" width="15" height="10" viewBox="0 0 15 10"><path d="M1.500 2.500l5 5 5-5" fill="none" stroke="#afb1b3" stroke-width="1.500"/></svg>
<svg style="left:1275px;top:323.5px;" width="20" height="17" viewBox="0 0 20 17"><path d="M6 .8Q3.200 .8 3.200 3V4.600Q3.200 6.300 1 6.500 3.200 6.700 3.200 8.400V10Q3.200 12.200 6 12.200" fill="none" stroke="#afb1b3" stroke-width="1.900"/><path d="M10.400 .8Q13.200 .8 13.200 3V4.600Q13.200 6.300 15.400 6.500 13.200 6.700 13.200 8.400V10Q13.200 12.200 10.400 12.200" fill="none" stroke="#afb1b3" stroke-width="1.900"/></svg>
<span class="t" style="left:1299.4px;top:321px;line-height:20px;font-size:15px;color:#bbbbbb;letter-spacing:1.634px;">age</span>
<span class="t" style="left:1338.9px;top:321px;line-height:20px;font-size:14px;color:#787878;letter-spacing:0.665px;">Int32</span>
<svg style="left:1251px;top:349px;" width="15" height="10" viewBox="0 0 15 10"><path d="M1.500 2.500l5 5 5-5" fill="none" stroke="#afb1b3" stroke-width="1.500"/></svg>
<svg style="left:1275px;top:348.5px;" width="20" height="17" viewBox="0 0 20 17"><path d="M6 .8Q3.200 .8 3.200 3V4.600Q3.200 6.300 1 6.500 3.200 6.700 3.200 8.400V10Q3.200 12.200 6 12.200" fill="none" stroke="#afb1b3" stroke-width="1.900"/><path d="M10.400 .8Q13.200 .8 13.200 3V4.600Q13.200 6.300 15.400 6.500 13.200 6.700 13.200 8.400V10Q13.200 12.200 10.400 12.200" fill="none" stroke="#afb1b3" stroke-width="1.900"/></svg>
<span class="t" style="left:1299.4px;top:346px;line-height:20px;font-size:15px;color:#bbbbbb;letter-spacing:1.256px;">name</span>
<span class="t" style="left:1351.9px;top:346px;line-height:20px;font-size:14px;color:#787878;letter-spacing:0.244px;">String</span>
<div style="left:1130px;top:166px;width:312px;height:212px;border:3px solid #fd3a3a;box-sizing:border-box;"></div>
<span class="t" style="left:35.4px;top:638px;line-height:20px;font-size:15px;color:#bbbbbb;letter-spacing:0.538px;">Services</span>
<svg style="left:1795px;top:639px;" width="18" height="18" viewBox="0 0 18 18"><circle cx="9" cy="9" r="7.600" fill="none" stroke="#afb1b3" stroke-width="2"/><path d="M9 1.500v5M9 11.500v5M1.500 9h5M11.500 9h5" stroke="#afb1b3" stroke-width="2"/></svg>
<div style="left:1824px;top:636px;width:1px;height:24px;background:#555758;"></div>
<svg style="left:1836px;top:639px;" width="17" height="17" viewBox="0 0 16 16"><path d="M5.81 2.31L6.20 0.21L9.80 0.21L10.19 2.31L11.84 3.26L13.85 2.54L15.65 5.66L14.02 7.05L14.02 8.95L15.65 10.34L13.85 13.46L11.84 12.74L10.19 13.69L9.80 15.79L6.20 15.79L5.81 13.69L4.16 12.74L2.15 13.46L0.35 10.34L1.98 8.95L1.98 7.05L0.35 5.66L2.15 2.54L4.16 3.26z" fill="#afb1b3"/><circle cx="8" cy="8" r="2.800" fill="#3c3f41"/></svg>
<div style="left:1870px;top:647px;width:16px;height:2px;background:#afb1b3;"></div>
<div style="left:64px;top:665px;width:1px;height:302px;background:#323232;"></div>
<div style="left:40px;top:678px;width:12px;height:12px;background:#5a5c5d;"></div>
<div style="left:34px;top:704px;width:25px;height:1px;background:#555758;"></div>
<svg style="left:38px;top:719px;" width="16" height="12" viewBox="0 0 16 12"><rect x="0" y="0" width="7" height="5" fill="#afb1b3"/><rect x="9" y="0" width="7" height="5" fill="#afb1b3"/><rect x="0" y="7" width="16" height="5" fill="#afb1b3"/></svg>
<svg style="left:73px;top:672px;" width="16" height="18" viewBox="0 0 16 18"><path d="M0 1.300h16M0 16.700h16" stroke="#afb1b3" stroke-width="2.500"/><path d="M8 4.400l4 3.300H4zM8 13.600l4-3.300H4z" fill="#afb1b3"/></svg>
<svg style="left:106px;top:672px;" width="16" height="18" viewBox="0 0 16 18"><path d="M0 9h16" stroke="#afb1b3" stroke-width="2"/><path d="M8 6.500l4.200-4.500H3.800zM8 11.500l4.200 4.500H3.800z" fill="#afb1b3"/></svg>
<div style="left:134px;top:669px;width:1px;height:25px;background:#555758;"></div>
<svg style="left:147px;top:673px;" width="20" height="18" viewBox="0 0 20 18"><rect x="1" y="1" width="5" height="5" fill="#afb1b3"/><rect x="8" y="1" width="5" height="5" fill="#afb1b3"/><rect x="1" y="8" width="5" height="5" fill="#afb1b3"/><rect x="8" y="8" width="5" height="5" fill="#afb1b3"/><path d="M11 14.500h8l-4 4z" fill="#afb1b3"/></svg>
<svg style="left:178px;top:671px;" width="20" height="18" viewBox="0 0 20 18"><path d="M0 16.500Q2.500 15 2.500 12V3Q2.500 1 4.500 1H15.500Q17.500 1 17.500 3V12Q17.500 15 20 16.500" fill="none" stroke="#afb1b3" stroke-width="1.600"/><path d="M10 4.500v8M6 8.500h8" stroke="#afb1b3" stroke-width="1.600"/></svg>
<div style="left:208px;top:669px;width:1px;height:25px;background:#555758;"></div>
<svg style="left:222px;top:673px;" width="20" height="20" viewBox="0 0 20 20"><path d="M7 1v14M0 8h14" stroke="#afb1b3" stroke-width="2"/><path d="M11 15h8l-4 4.500z" fill="#afb1b3"/></svg>
<div style="left:65px;top:699px;width:549px;height:1px;background:#323232;"></div>
<div style="left:65px;top:750px;width:549px;height:25px;background:#0d293e;"></div>
<svg style="left:74px;top:707px;" width="15" height="10" viewBox="0 0 15 10"><path d="M1.500 2.500l5 5 5-5" fill="none" stroke="#afb1b3" stroke-width="1.500"/></svg>
<svg style="left:100px;top:704px;" width="10" height="19" viewBox="0 0 10 19"><path d="M5 0C2 3.5 0 6.5 0 9.5C0 13 2.5 15.5 4.6 16.5L4.7 19h.8L5.6 16.5C7.5 15.5 10 13 10 9.5C10 6.5 8 3.5 5 0z" fill="#10aa50"/><path d="M5 0C8 3.5 10 6.5 10 9.5C10 13 7.5 15.5 5.4 16.5L5 16.5z" fill="#0e9a48"/><path d="M4.7 16.3h.7l-.1 2.7h-.5z" fill="#b8c4c2"/></svg>
<span class="t" style="left:118.4px;top:704px;line-height:20px;font-size:15px;color:#bbbbbb;letter-spacing:0.857px;">admin@localhost</span>
<svg style="left:96px;top:732px;" width="15" height="10" viewBox="0 0 15 10"><path d="M1.500 2.500l5 5 5-5" fill="none" stroke="#afb1b3" stroke-width="1.500"/></svg>
<svg style="left:118px;top:728px;" width="20" height="20" viewBox="0 0 20 20"><path d="M0 6.500q0-2 1.500-2v8.500Q0 13 0 11z" fill="#9aa7b0"/><path d="M3 4.500Q3 2.500 5.500 2.500h6v12.500h-6Q3 15 3 13z" fill="#9aa7b0"/><path d="M11.500 4.500h7v2.500h-7zM11.500 10.500h7v2.500h-7z" fill="#9aa7b0"/><circle cx="16.800" cy="17" r="2.400" fill="#00e000"/></svg>
<span class="t" style="left:140.4px;top:729px;line-height:20px;font-size:15px;color:#bbbbbb;letter-spacing:1.016px;">console</span>
<span class="t" style="left:204.4px;top:729px;line-height:20px;font-size:15px;color:#787878;letter-spacing:0.436px;">2 s 312 ms</span>
<svg style="left:145px;top:754px;" width="10" height="19" viewBox="0 0 10 19"><path d="M5 0C2 3.5 0 6.5 0 9.5C0 13 2.5 15.5 4.6 16.5L4.7 19h.8L5.6 16.5C7.5 15.5 10 13 10 9.5C10 6.5 8 3.5 5 0z" fill="#10aa50"/><path d="M5 0C8 3.5 10 6.5 10 9.5C10 13 7.5 15.5 5.4 16.5L5 16.5z" fill="#0e9a48"/><path d="M4.7 16.3h.7l-.1 2.7h-.5z" fill="#b8c4c2"/></svg>
<span class="t" style="left:163.4px;top:754px;line-height:20px;font-size:15px;color:#d8d8d8;letter-spacing:1.016px;">console</span>
<span class="t" style="left:227.9px;top:754px;line-height:20px;font-size:15px;color:#8a9199;letter-spacing:0.436px;">2 s 312 ms</span>
<div style="left:614px;top:665px;width:1px;height:302px;background:#323232;"></div>
<svg style="left:632px;top:676px;" width="16" height="17" viewBox="0 0 16 17"><rect x="0" y="0" width="15.500" height="12.500" fill="#afb1b3"/><path d="M4.500 2.500l3 3-3 3" fill="none" stroke="#3c3f41" stroke-width="1.600"/><circle cx="6.300" cy="12.500" r="4.300" fill="#f4af3d" stroke="#3c3f41" stroke-width=".8"/><path d="M6.300 9.500v5M4.300 12.500l2 2 2-2" stroke="#3c3f41" stroke-width="1.100" fill="none"/></svg>
<span class="t" style="left:654.4px;top:675px;line-height:20px;font-size:13.5px;color:#bbbbbb;letter-spacing:1.054px;">Output</span>
<svg style="left:726px;top:677px;" width="17" height="14" viewBox="0 0 18 15"><rect x="0" y="0" width="18" height="15" fill="#909ca5"/><rect x="1.8" y="4.2" width="3.600" height="2.300" fill="#3c3f41"/><rect x="7.2" y="4.2" width="3.600" height="2.300" fill="#3c3f41"/><rect x="12.6" y="4.2" width="3.600" height="2.300" fill="#3c3f41"/><rect x="1.8" y="7.6" width="3.600" height="2.300" fill="#3c3f41"/><rect x="7.2" y="7.6" width="3.600" height="2.300" fill="#3c3f41"/><rect x="12.6" y="7.6" width="3.600" height="2.300" fill="#3c3f41"/><rect x="1.8" y="11" width="3.600" height="2.300" fill="#3c3f41"/><rect x="7.2" y="11" width="3.600" height="2.300" fill="#3c3f41"/><rect x="12.6" y="11" width="3.600" height="2.300" fill="#3c3f41"/></svg>
<span class="t" style="left:749.4px;top:675px;line-height:20px;font-size:13.5px;color:#bbbbbb;letter-spacing:0.167px;">admin.user</span>
<svg style="left:826px;top:679px;" width="10" height="10" viewBox="0 0 10 10"><path d="M1 1l8 8M9 1l-8 8" stroke="#7f8283" stroke-width="1.200"/></svg>
<div style="left:710px;top:698px;width:141px;height:2px;background:#7d868c;"></div>
<div style="left:615px;top:700px;width:1279px;height:1px;background:#323232;"></div>
<svg style="left:627px;top:712px;" width="13" height="12" viewBox="0 0 13 12"><path d="M1.500 0v12M12 1L6 6l6 5" fill="none" stroke="#5e6061" stroke-width="1.600"/></svg>
<svg style="left:660px;top:712px;" width="8" height="12" viewBox="0 0 8 12"><path d="M7 1L1.500 6 7 11" fill="none" stroke="#5e6061" stroke-width="1.600"/></svg>
<span class="t" style="left:687.9px;top:709px;line-height:20px;font-size:13.5px;color:#bbbbbb;letter-spacing:0.107px;">2 rows</span>
<svg style="left:735px;top:715px;" width="10" height="7" viewBox="0 0 10 7"><path d="M1 1l4 4 4-4" fill="none" stroke="#9a9da0" stroke-width="1.400"/></svg>
<svg style="left:762px;top:712px;" width="8" height="12" viewBox="0 0 8 12"><path d="M1 1l5.500 5L1 11" fill="none" stroke="#5e6061" stroke-width="1.600"/></svg>
<svg style="left:792px;top:712px;" width="13" height="12" viewBox="0 0 13 12"><path d="M11.500 0v12M1 1l6 5-6 5" fill="none" stroke="#5e6061" stroke-width="1.600"/></svg>
<div style="left:819px;top:705px;width:1px;height:27px;background:#555758;"></div>
<svg style="left:832px;top:709px;" width="18" height="18" viewBox="0 0 18 18"><path d="M15.500 7A6.700 6.700 0 0 0 3.300 4.500M2.500 11a6.700 6.700 0 0 0 12.200 2.500" fill="none" stroke="#afb1b3" stroke-width="2"/><path d="M1 1v6h6zM17 17v-6h-6z" fill="#afb1b3"/></svg>
<div style="left:866px;top:711px;width:14px;height:14px;background:#5a5c5d;"></div>
<div style="left:893px;top:705px;width:1px;height:27px;background:#555758;"></div>
<svg style="left:907px;top:711px;" width="14" height="14" viewBox="0 0 14 14"><path d="M7 0v14M0 7h14" stroke="#afb1b3" stroke-width="2"/></svg>
<div style="left:939px;top:717px;width:14px;height:2px;background:#5e6061;"></div>
<svg style="left:971px;top:709px;" width="18" height="18" viewBox="0 0 18 18"><path d="M3 6.500h8a4.500 4.500 0 0 1 0 9.500h-5" stroke="#5e6061" stroke-width="2" fill="none"/><path d="M6.500 1.500l-5 5 5 5" stroke="#5e6061" stroke-width="2" fill="none"/></svg>
<svg style="left:1003px;top:709px;" width="18" height="18" viewBox="0 0 18 18"><path d="M2 9a7 7 0 0 1 14 0" fill="none" stroke="#5e6061" stroke-width="2"/><circle cx="9" cy="8" r="2.500" fill="#5e6061"/><path d="M9 18v-6M5.500 14.500L9 11l3.500 3.500" fill="none" stroke="#5e6061" stroke-width="2"/></svg>
<svg style="left:1036px;top:709px;" width="16" height="18" viewBox="0 0 16 18"><path d="M8 1l8 8h-5v6H5V9H0z" fill="#5e6061"/></svg>
<div style="left:1064px;top:705px;width:1px;height:27px;background:#555758;"></div>
<span class="t" style="left:1078.9px;top:709px;line-height:20px;font-size:13.5px;color:#a9b7c6;letter-spacing:-1.108px;">DDL</span>
<div style="left:1120px;top:705px;width:1px;height:27px;background:#555758;"></div>
<svg style="left:1130px;top:708px;" width="20" height="20" viewBox="0 0 20 20"><path d="M12.500 0L20 7.500l-2 .8-1.300-1.300-4 4 .5 4-1.500 1.500-4-4L1 19.500 0 19l6.500-7-4-4L4 6.500l4 .5 4-4L10.800 1.700z" fill="#afb1b3"/></svg>
<span class="t" style="left:1652.4px;top:709px;line-height:20px;font-size:13.5px;color:#bbbbbb;letter-spacing:-1.239px;">JSON</span>
<svg style="left:1693px;top:715px;" width="10" height="7" viewBox="0 0 10 7"><path d="M1 1l4 4 4-4" fill="none" stroke="#9a9da0" stroke-width="1.400"/></svg>
<div style="left:1718px;top:705px;width:1px;height:27px;background:#555758;"></div>
<svg style="left:1731px;top:709px;" width="16" height="18" viewBox="0 0 16 18"><path d="M8 1v8" stroke="#afb1b3" stroke-width="2.400"/><path d="M2.800 7.500h10.400L8 13z" fill="#afb1b3"/><path d="M0 15.800h16" stroke="#afb1b3" stroke-width="2.400"/></svg>
<svg style="left:1763px;top:709px;" width="16" height="18" viewBox="0 0 16 18"><path d="M8 17v-8" stroke="#afb1b3" stroke-width="2.400"/><path d="M2.800 11.500h10.400L8 6z" fill="#afb1b3"/><path d="M0 2.200h16" stroke="#afb1b3" stroke-width="2.400"/></svg>
<svg style="left:1795px;top:708px;" width="22" height="22" viewBox="0 0 22 22"><path d="M18.500 5.800L13 7" stroke="#3592c4" stroke-width="2.400"/><path d="M8.500 7.500l5.500-5 1 8z" fill="#3592c4"/><path d="M0.500 14h6" stroke="#3592c4" stroke-width="2.400"/><path d="M5.500 9.500l5.500 4.500-5.500 4.500z" fill="#3592c4"/><path d="M13 17.500h7.500l-3.750 3.500z" fill="#afb1b3"/></svg>
<div style="left:1824px;top:705px;width:1px;height:27px;background:#555758;"></div>
<svg style="left:1836px;top:709px;" width="22" height="20" viewBox="0 0 22 20"><path d="M0 8Q4.500 1.500 9.500 1.500T19 8Q14.500 14.500 9.500 14.500T0 8z" fill="#afb1b3"/><circle cx="9.500" cy="8" r="3.800" fill="#3c3f41"/><circle cx="9.500" cy="8" r="1.900" fill="#afb1b3"/><path d="M14 15.500h7l-3.500 3.500z" fill="#afb1b3"/></svg>
<svg style="left:1870px;top:710px;" width="16.5" height="16.5" viewBox="0 0 16 16"><path d="M5.81 2.31L6.20 0.21L9.80 0.21L10.19 2.31L11.84 3.26L13.85 2.54L15.65 5.66L14.02 7.05L14.02 8.95L15.65 10.34L13.85 13.46L11.84 12.74L10.19 13.69L9.80 15.79L6.20 15.79L5.81 13.69L4.16 12.74L2.15 13.46L0.35 10.34L1.98 8.95L1.98 7.05L0.35 5.66L2.15 2.54L4.16 3.26z" fill="#afb1b3"/><circle cx="8" cy="8" r="2.800" fill="#3c3f41"/></svg>
<svg style="left:1882px;top:725px;" width="8" height="4" viewBox="0 0 8 4"><path d="M0 0h8l-4 4z" fill="#afb1b3"/></svg>
<div style="left:615px;top:735px;width:1279px;height:1px;background:#323232;"></div>
<div style="left:615px;top:736px;width:1266px;height:230px;background:#2b2b2b;"></div>
<div style="left:1881px;top:736px;width:13px;height:230px;background:#3f4244;"></div>
<div style="left:1882px;top:768px;width:10px;height:194px;background:#5a5d5f;"></div>
<div style="left:615px;top:736px;width:587px;height:30px;background:#3b3d3e;"></div>
<div style="left:615px;top:766px;width:31px;height:58px;background:#313335;"></div>
<div style="left:645px;top:736px;width:1px;height:88px;background:#3a3c3d;"></div>
<div style="left:954px;top:736px;width:1px;height:88px;background:#3a3c3d;"></div>
<div style="left:1071px;top:736px;width:1px;height:88px;background:#3a3c3d;"></div>
<div style="left:1201px;top:736px;width:1px;height:88px;background:#3a3c3d;"></div>
<div style="left:615px;top:766px;width:587px;height:1px;background:#3a3c3d;"></div>
<div style="left:615px;top:794px;width:587px;height:1px;background:#3a3c3d;"></div>
<div style="left:615px;top:823px;width:587px;height:1px;background:#3a3c3d;"></div>
<svg style="left:652px;top:744px;" width="20" height="17" viewBox="0 0 20 17"><path d="M6 .8Q3.200 .8 3.200 3V4.600Q3.200 6.300 1 6.500 3.200 6.700 3.200 8.400V10Q3.200 12.200 6 12.200" fill="none" stroke="#afb1b3" stroke-width="1.900"/><path d="M8.500 1h.8q2 .3 2.300 2M8.500 12h.8" fill="none" stroke="#afb1b3" stroke-width="1.500"/><circle cx="14" cy="5.500" r="2.600" fill="none" stroke="#e8a33e" stroke-width="2.200"/><path d="M14 8v6.500M14 11h3M14 14h3" stroke="#e8a33e" stroke-width="2" fill="none"/></svg>
<span class="t m" style="left:674.4px;top:742px;line-height:20px;font-size:16px;color:#a9b7c6;letter-spacing:1.244px;-webkit-text-stroke:0.3px;">_id</span>
<svg style="left:937px;top:745px;" width="7" height="11" viewBox="0 0 7 11"><path d="M0 4l3.200-4 3.200 4zM0 6.500l3.200 4 3.200-4z" fill="#afb1b3"/></svg>
<svg style="left:990px;top:744px;" width="17" height="13" viewBox="0 0 17 13"><path d="M6 .8Q3.200 .8 3.200 3V4.600Q3.200 6.300 1 6.500 3.200 6.700 3.200 8.400V10Q3.200 12.200 6 12.200" fill="none" stroke="#afb1b3" stroke-width="1.900"/><path d="M10.400 .8Q13.200 .8 13.200 3V4.600Q13.200 6.300 15.400 6.500 13.200 6.700 13.200 8.400V10Q13.200 12.200 10.400 12.200" fill="none" stroke="#afb1b3" stroke-width="1.900"/></svg>
<span class="t m" style="left:1012.4px;top:742px;line-height:20px;font-size:16px;color:#a9b7c6;letter-spacing:1.244px;-webkit-text-stroke:0.3px;">age</span>
<svg style="left:1055px;top:745px;" width="7" height="11" viewBox="0 0 7 11"><path d="M0 4l3.200-4 3.200 4zM0 6.500l3.200 4 3.200-4z" fill="#afb1b3"/></svg>
<svg style="left:1078px;top:744px;" width="17" height="13" viewBox="0 0 17 13"><path d="M6 .8Q3.200 .8 3.200 3V4.600Q3.200 6.300 1 6.500 3.200 6.700 3.200 8.400V10Q3.200 12.200 6 12.200" fill="none" stroke="#afb1b3" stroke-width="1.900"/><path d="M10.400 .8Q13.200 .8 13.200 3V4.600Q13.200 6.300 15.400 6.500 13.200 6.700 13.200 8.400V10Q13.200 12.200 10.400 12.200" fill="none" stroke="#afb1b3" stroke-width="1.900"/></svg>
<span class="t m" style="left:1100.4px;top:742px;line-height:20px;font-size:16px;color:#a9b7c6;letter-spacing:0.965px;-webkit-text-stroke:0.3px;">name</span>
<svg style="left:1185px;top:745px;" width="7" height="11" viewBox="0 0 7 11"><path d="M0 4l3.200-4 3.200 4zM0 6.500l3.200 4 3.200-4z" fill="#afb1b3"/></svg>
<span class="t m" style="left:624.4px;top:774px;line-height:20px;font-size:16px;color:#a9b7c6;letter-spacing:1.691px;-webkit-text-stroke:0.3px;">1</span>
<span class="t m" style="left:648.4px;top:774px;line-height:20px;font-size:16px;color:#a9b7c6;letter-spacing:0.472px;-webkit-text-stroke:0.3px;">642ae43d402284cd0cf3b5bb</span>
<span class="t m" style="left:1045.9px;top:774px;line-height:20px;font-size:16px;color:#a9b7c6;letter-spacing:0.597px;-webkit-text-stroke:0.3px;">35</span>
<span class="t m" style="left:1075.9px;top:774px;line-height:20px;font-size:16px;color:#a9b7c6;letter-spacing:0.196px;">福州司马懿</span>
<span class="t m" style="left:624.4px;top:802px;line-height:20px;font-size:16px;color:#a9b7c6;letter-spacing:1.691px;-webkit-text-stroke:0.3px;">2</span>
<span class="t m" style="left:648.4px;top:802px;line-height:20px;font-size:16px;color:#a9b7c6;letter-spacing:0.472px;-webkit-text-stroke:0.3px;">642ae46f402284cd0cf3b5bc</span>
<span class="t m" style="left:1045.9px;top:802px;line-height:20px;font-size:16px;color:#a9b7c6;letter-spacing:0.597px;-webkit-text-stroke:0.3px;">18</span>
<span class="t m" style="left:1075.9px;top:802px;line-height:20px;font-size:16px;color:#a9b7c6;letter-spacing:0.142px;">诸葛亮</span>
<div style="left:616px;top:719px;width:616px;height:117px;border:3px solid #fd3a3a;box-sizing:border-box;"></div>
<div style="left:1187px;top:967px;width:95px;height:28px;background:#2d2f30;"></div>
<svg style="left:41px;top:974px;" width="11" height="16" viewBox="0 0 11 16"><circle cx="2.500" cy="2.500" r="2.200" fill="#afb1b3"/><circle cx="8.500" cy="4.500" r="2.200" fill="#afb1b3"/><circle cx="2.500" cy="13.500" r="2.200" fill="#afb1b3"/><path d="M2.500 3v10M8.500 5.500q0 4-6 5" fill="none" stroke="#afb1b3" stroke-width="1.700"/></svg>
<span class="t" style="left:59.4px;top:974px;line-height:20px;font-size:13.5px;color:#bbbbbb;letter-spacing:0.767px;">Git</span>
<svg style="left:104px;top:974px;" width="17" height="16" viewBox="0 0 17 16"><ellipse cx="8" cy="2.500" rx="7" ry="2.500" fill="#afb1b3"/><path d="M1 4.500c0 1.500 3 2.500 7 2.500s7-1 7-2.500v2c0 1.500-3 2.500-7 2.500s-7-1-7-2.500zM1 8.500c0 1.500 3 2.500 7 2.500l2-.1-2 3.600c-4 0-7-1-7-2.500z" fill="#afb1b3"/><path d="M9 12l2.500 2.500 5-5.500" fill="none" stroke="#afb1b3" stroke-width="1.700"/></svg>
<span class="t" style="left:124.4px;top:974px;line-height:20px;font-size:13.5px;color:#bbbbbb;letter-spacing:-0.020px;">Database Changes</span>
<svg style="left:266px;top:974px;" width="18" height="16" viewBox="0 0 18 16"><circle cx="3" cy="12.500" r="3" fill="#afb1b3"/><circle cx="15" cy="12.500" r="3" fill="#afb1b3"/><circle cx="9" cy="3" r="3" fill="#afb1b3"/><path d="M3 12.500L9 3l6 9.500" fill="none" stroke="#afb1b3" stroke-width="1.400"/></svg>
<span class="t" style="left:288.4px;top:974px;line-height:20px;font-size:13.5px;color:#bbbbbb;letter-spacing:0.219px;">Endpoints</span>
<svg style="left:375px;top:974px;" width="17" height="16" viewBox="0 0 17 16"><circle cx="7" cy="7" r="5.800" fill="none" stroke="#afb1b3" stroke-width="1.600"/><path d="M7 3.500v4l2.500 1.500" fill="none" stroke="#afb1b3" stroke-width="1.400"/><path d="M9 8.500l7.500 4-7.500 4z" fill="#afb1b3" stroke="#3c3f41" stroke-width="1"/></svg>
<span class="t" style="left:395.4px;top:974px;line-height:20px;font-size:13.5px;color:#bbbbbb;letter-spacing:0.362px;">Profiler</span>
<svg style="left:465px;top:974px;" width="17" height="16" viewBox="0 0 17 16"><path d="M1 5l4.500-4.500h3l2.200 2.200-1.300.5-.9-.9-1.800 1.800 9 10-2.200 2.200-9-10-1.300 1.300z" fill="#afb1b3"/></svg>
<span class="t" style="left:485.4px;top:974px;line-height:20px;font-size:13.5px;color:#bbbbbb;letter-spacing:0.192px;">Build</span>
<svg style="left:542px;top:974px;" width="17" height="16" viewBox="0 0 17 16"><path d="M8.500 0L17 3.800 8.500 7.600 0 3.800z" fill="#afb1b3"/><path d="M0 7.500l2-.9 6.500 2.900L15 6.600l2 .9-8.500 3.800zM0 11.200l2-.9 6.500 2.900 6.500-2.900 2 .9-8.500 3.800z" fill="#afb1b3"/></svg>
<span class="t" style="left:563.4px;top:974px;line-height:20px;font-size:13.5px;color:#bbbbbb;letter-spacing:0.043px;">Dependencies</span>
<svg style="left:677px;top:976px;" width="15" height="12" viewBox="0 0 15 12"><path d="M0 1.500h2.500M4.500 1.500H15M0 6h2.500M4.500 6H15M0 10.500h2.500M4.500 10.500H15" stroke="#afb1b3" stroke-width="2"/></svg>
<span class="t" style="left:697.4px;top:974px;line-height:20px;font-size:13.5px;color:#bbbbbb;letter-spacing:0.345px;">TODO</span>
<svg style="left:762px;top:974px;" width="14" height="14" viewBox="0 0 14 14"><circle cx="7" cy="7" r="7" fill="#c75450"/><rect x="6" y="3" width="2" height="5" fill="#3c3f41"/><rect x="6" y="9.500" width="2" height="2" fill="#3c3f41"/></svg>
<span class="t" style="left:782.4px;top:974px;line-height:20px;font-size:13.5px;color:#bbbbbb;letter-spacing:0.110px;">Problems</span>
<svg style="left:865px;top:974px;" width="17" height="15" viewBox="0 0 17 15"><path d="M0 11C0 5 5 2.500 15.500 0 17 6 14 14 7 14c-2.500 0-4-.500-5-1.500L.5 14z" fill="#afb1b3"/></svg>
<span class="t" style="left:885.4px;top:974px;line-height:20px;font-size:13.5px;color:#bbbbbb;letter-spacing:0.354px;">Spring</span>
<svg style="left:951px;top:975px;" width="16" height="13" viewBox="0 0 16 13"><rect width="16" height="13" fill="#afb1b3"/><path d="M3 3.500l3 3-3 3M8 9.500h5" fill="none" stroke="#3c3f41" stroke-width="1.500"/></svg>
<span class="t" style="left:972.4px;top:974px;line-height:20px;font-size:13.5px;color:#bbbbbb;letter-spacing:0.326px;">Terminal</span>
<svg style="left:1051px;top:974px;" width="17" height="17" viewBox="0 0 17 17"><path d="M8.500 0L16 2.500V9c0 4-3.500 7-7.500 8C4.500 16 1 13 1 9V2.500z" fill="none" stroke="#3d9ae0" stroke-width="1.800"/><circle cx="8.500" cy="8.300" r="3.600" fill="#3d9ae0"/></svg>
<span class="t" style="left:1072.4px;top:974px;line-height:20px;font-size:13.5px;color:#bbbbbb;letter-spacing:0.154px;">CodeArts Check</span>
<svg style="left:1200px;top:974px;" width="16" height="16" viewBox="0 0 16 16"><path d="M8 0l7 4v8l-7 4-7-4V4z" fill="#d0d2d3"/><path d="M6 4.500L11.500 8 6 11.500z" fill="#2d2f30"/></svg>
<span class="t" style="left:1220.4px;top:974px;line-height:20px;font-size:13.5px;color:#ffffff;letter-spacing:-0.138px;">Services</span>
<svg style="left:6px;top:1000px;" width="17" height="16" viewBox="0 0 17 16"><path d="M3.500 0.800H16v12.500" fill="none" stroke="#9b9e9f" stroke-width="1.500"/><rect x=".8" y="3.500" width="12.500" height="11.700" fill="none" stroke="#9b9e9f" stroke-width="1.500"/></svg>
<span class="t" style="left:33.4px;top:998px;line-height:20px;font-size:15px;color:#bbbbbb;letter-spacing:0.621px;">2 rows retrieved starting from 1 in 464 ms (execution: 323 ms, fetching: 141 ms)</span>
<span class="t" style="left:1573.9px;top:998px;line-height:20px;font-size:15px;color:#bbbbbb;letter-spacing:0.699px;">1:15</span>
<span class="t" style="left:1619.4px;top:998px;line-height:20px;font-size:15px;color:#bbbbbb;letter-spacing:-0.791px;">CRLF</span>
<span class="t" style="left:1670.9px;top:998px;line-height:20px;font-size:15px;color:#bbbbbb;letter-spacing:0.200px;">UTF-8</span>
<span class="t" style="left:1728.4px;top:998px;line-height:20px;font-size:15px;color:#bbbbbb;letter-spacing:0.393px;">4 spaces</span>
<svg style="left:1808px;top:999px;" width="13" height="18" viewBox="0 0 13 18"><circle cx="3" cy="3" r="2.400" fill="#afb1b3"/><circle cx="10" cy="5" r="2.400" fill="#afb1b3"/><circle cx="3" cy="15.500" r="2.400" fill="#afb1b3"/><path d="M3 3v12M10 6q0 4.500-7 5.500" fill="none" stroke="#afb1b3" stroke-width="1.800"/></svg>
<span class="t" style="left:1827.9px;top:998px;line-height:20px;font-size:15px;color:#bbbbbb;letter-spacing:0.891px;">master</span>
<svg style="left:1890px;top:1000px;" width="16" height="15" viewBox="0 0 16 15"><path d="M2 7V4.500a3 3 0 0 1 6 0V6" fill="none" stroke="#afb1b3" stroke-width="1.800"/><rect x="6" y="6.500" width="9" height="8" fill="#afb1b3"/></svg>
<div style="left:0px;top:1020px;width:1920px;height:1px;background:#a5a7a8;"></div>
<div style="left:0px;top:71px;width:28px;height:89px;background:#2d2f30;"></div>
<span class="t" style="left:6.5px;top:80px;line-height:18px;font-size:14px;color:#ffffff;writing-mode:vertical-rl;transform:rotate(180deg);letter-spacing:0.287px;">Project</span>
<svg style="left:7px;top:132px;" width="14" height="12" viewBox="0 0 14 12"><path d="M0 0h5.500l1.500 2H14v10H0z" fill="#c8cacb"/></svg>
<span class="t" style="left:6.5px;top:175px;line-height:18px;font-size:14px;color:#bbbbbb;writing-mode:vertical-rl;transform:rotate(180deg);letter-spacing:0.043px;">Huawei Cloud Toolkit</span>
<svg style="left:4px;top:311px;" width="20" height="21" viewBox="0 0 20 21"><path d="M10 14L8 3Q10 1 12 3zM9 14.500L3 5Q5.500 2.500 7.300 4.500zM11 14.500L17 5Q14.500 2.500 12.700 4.500zM8.500 15.500L0 9.500Q1 6 3.500 7zM11.500 15.500L20 9.500Q19 6 16.500 7z" fill="#e8202a"/><rect x="2" y="18" width="16" height="2" fill="#7a1a1e"/></svg>
<span class="t" style="left:6.5px;top:360px;line-height:18px;font-size:14px;color:#bbbbbb;writing-mode:vertical-rl;transform:rotate(180deg);letter-spacing:0.213px;">Commit</span>
<svg style="left:6px;top:416px;" width="17" height="13" viewBox="0 0 17 13"><circle cx="8.500" cy="6.500" r="3.600" fill="none" stroke="#afb1b3" stroke-width="2.200"/><path d="M0 6.500h5M12 6.500h5" stroke="#afb1b3" stroke-width="2.200"/></svg>
<span class="t" style="left:6.5px;top:861px;line-height:18px;font-size:14px;color:#bbbbbb;writing-mode:vertical-rl;transform:rotate(180deg);letter-spacing:-0.091px;">Bookmarks</span>
<svg style="left:8px;top:936px;" width="12" height="15" viewBox="0 0 12 15"><path d="M0 0h12v15l-6-5-6 5z" fill="#afb1b3"/></svg>
<div style="left:1894px;top:160px;width:26px;height:105px;background:#2d2f30;"></div>
<span class="t" style="left:1899px;top:80px;font-size:18px;line-height:22px;font-style:italic;font-weight:bold;color:#afb1b3;">m</span>
<span class="t" style="left:1897px;top:106px;line-height:18px;font-size:14px;color:#bbbbbb;writing-mode:vertical-rl;letter-spacing:-0.183px;">Maven</span>
<svg style="left:1900px;top:174px;" width="16" height="16" viewBox="0 0 16 16"><ellipse cx="8" cy="3" rx="7.500" ry="3" fill="#c8cacb"/><path d="M.5 5.500c0 1.700 3.400 3 7.500 3s7.500-1.300 7.500-3v2c0 1.700-3.400 3-7.500 3s-7.500-1.300-7.500-3zM.5 9.500c0 1.700 3.400 3 7.500 3s7.500-1.300 7.500-3v2c0 1.700-3.400 3-7.500 3s-7.500-1.300-7.500-3z" fill="#c8cacb"/></svg>
<span class="t" style="left:1897px;top:194px;line-height:18px;font-size:14px;color:#ffffff;writing-mode:vertical-rl;letter-spacing:-0.377px;">Database</span>
<span class="t" style="left:1900px;top:278px;font-size:17px;line-height:20px;font-weight:bold;color:#afb1b3;">D</span>
<span class="t" style="left:1897px;top:299px;line-height:18px;font-size:14px;color:#bbbbbb;writing-mode:vertical-rl;letter-spacing:-0.055px;">Big Data Tools</span>
<svg style="left:1899px;top:418px;" width="16" height="16" viewBox="0 0 16 16"><path d="M7 1.500h2v1.200c2.300.6 3.500 2.500 3.500 5v3l1.500 1.800v1H1v-1l1.500-1.800v-3c0-2.500 1.200-4.400 3.500-5zM6 14.500h4c0 1-1 1.500-2 1.500s-2-.5-2-1.500z" fill="#afb1b3"/><circle cx="12.500" cy="3.500" r="3.200" fill="#e05555"/></svg>
<span class="t" style="left:1897px;top:439px;line-height:18px;font-size:14px;color:#bbbbbb;writing-mode:vertical-rl;letter-spacing:0.170px;">Notifications</span>
<svg style="left:1901px;top:548px;" width="13" height="14" viewBox="0 0 13 14"><rect x="6.500" y="0" width="5.500" height="5.500" fill="#afb1b3"/><rect x="0" y="8" width="5.500" height="5.500" fill="#afb1b3"/><rect x="7" y="8" width="5.500" height="5.500" fill="#afb1b3"/></svg>
<span class="t" style="left:1897px;top:565px;line-height:18px;font-size:14px;color:#bbbbbb;writing-mode:vertical-rl;letter-spacing:0.061px;">Structure</span>
<svg style="left:1900px;top:769px;" width="14" height="17" viewBox="0 0 14 17"><rect x="1" y="0" width="5.500" height="5.500" fill="#afb1b3"/><rect x="8" y="9" width="5.500" height="5.500" fill="#afb1b3"/><path d="M3.500 8l3.500 3.500-3.500 3.500L0 11.500z" fill="#afb1b3"/><path d="M3.700 5v4M6 11.700h3" stroke="#afb1b3" stroke-width="1.200"/></svg>
<span class="t" style="left:1897px;top:789px;line-height:18px;font-size:14px;color:#bbbbbb;writing-mode:vertical-rl;letter-spacing:0.030px;">BPMN-Flowable-Diagram</span>
</body></html>
